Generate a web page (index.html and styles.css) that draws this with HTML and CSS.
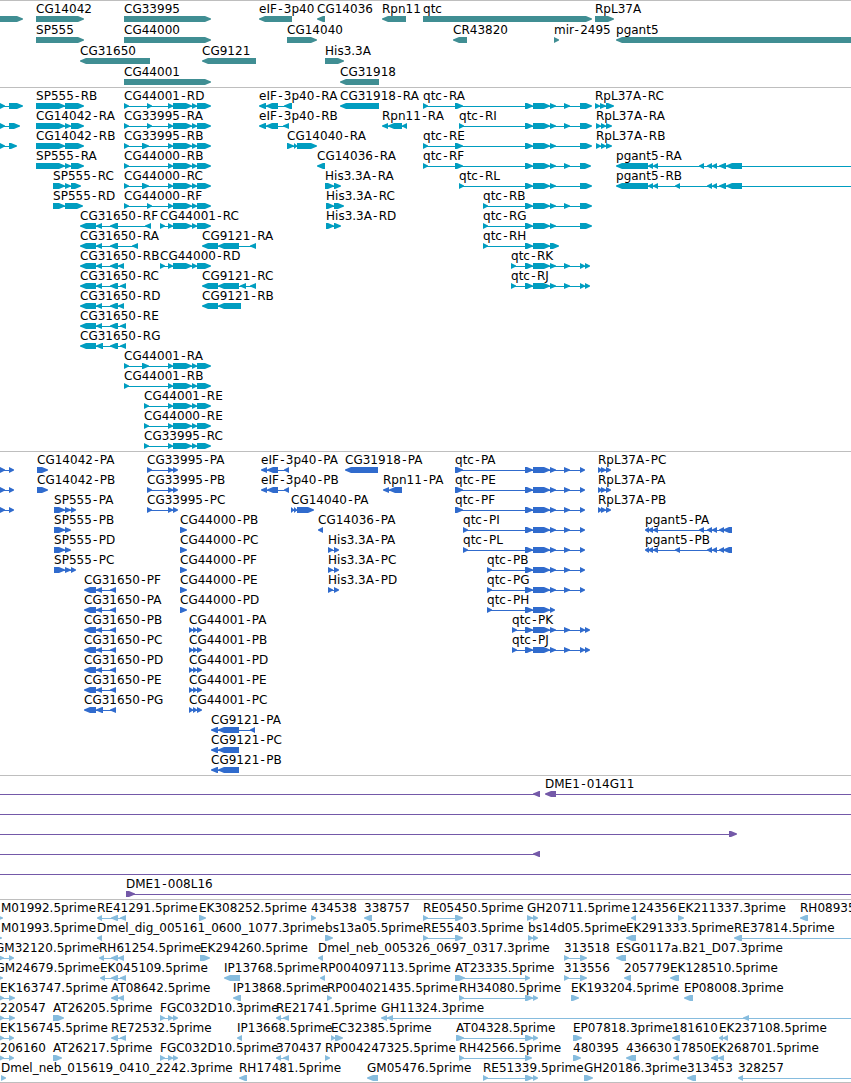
FILE: index.html
```html
<!DOCTYPE html>
<html lang="en">
<head>
  <meta charset="utf-8">
  <title>Genome browser</title>
  <link rel="stylesheet" href="styles.css">
</head>
<body>
  <main class="browser">
    <section class="track genes" id="genes"></section>
    <section class="track transcripts" id="transcripts"></section>
    <section class="track cds" id="cds"></section>
    <section class="track bacs" id="bacs"></section>
    <section class="track ests" id="ests"></section>
  </main>
  <script src="tracks.js"></script>
</body>
</html>
```
FILE: styles.css
```css
body {
  margin: 0;
  background: #fff;
  font-family: "DejaVu Sans", sans-serif;
  font-size: 12px;
}

.browser {
  display: flex;
  flex-direction: column;
  overflow: hidden;
  border-bottom: 1px solid #bebebe;
}

.track {
  box-sizing: border-box;
  border-top: 1px solid #bebebe;
}

.track svg {
  display: block;
  width: 100%;
  height: 100%;
}

.track text {
  fill: #000;
  white-space: pre;
}

.block, .intron {
  fill: currentColor;
}

/* One height and one colour for each track */
.genes {
  height: 87px;
  color: #408e93;
}

.transcripts {
  height: 364px;
  color: #009dc0;
}

.cds {
  height: 324px;
  color: #306bcd;
}

.bacs {
  height: 124px;
  color: #7459a8;
}

.ests {
  height: 183px;
  color: #86bcde;
}
```
FILE: tracks.js
```javascript
const SVG = 'http://www.w3.org/2000/svg';

// exons shared by several transcripts
const CG = '168-173 173-192 192-197 197-211';
const Q = '525-533 533-550 550-556';
const END = 861;

// Each row is a list of features: [label, strand, blocks, line end, label x]
const genes = [
  [['', '+', '-9-23'], ['CG14042', '+', '36-84'], ['CG33995', '+', '124-211'], ['eIF-3p40', '-', '259-292'],
   ['CG14036', '-', '317-325'], ['Rpn11', '-', '382-406'], ['qtc', '+', '423-592'], ['RpL37A', '+', '595-614']],
  [['SP555', '+', '36-84'], ['CG44000', '+', '124-211'], ['CG14040', '+', '287-317'], ['CR43820', '-', '453-467'],
   ['mir-2495', '+', '554-559'], ['pgant5', '-', '616-861']],
  [['CG31650', '-', '80-150'], ['CG9121', '-', '202-256'], ['His3.3A', '+', '325-344']],
  [['CG44001', '+', '124-211'], ['CG31918', '-', '340-379']]
];

const transcripts = [
  [['', '+', '0-5 9-23'], ['SP555-RB', '+', '36-65 65-84'], ['CG44001-RD', '+', '124-129 147-152 ' + CG],
   ['eIF-3p40-RA', '-', '259-266 266-278 284-292'], ['CG31918-RA', '-', '340-379'],
   ['qtc-RA', '+', '423-428 455-463 ' + Q + ' 564-570 580-592'], ['RpL37A-RC', '+', '595-600 600-606 606-614']],
  [['', '+', '0-5 9-20'], ['CG14042-RA', '+', '36-65 65-71 71-84'], ['CG33995-RA', '+', '124-129 147-152 ' + CG],
   ['eIF-3p40-RB', '-', '259-266 266-278 283-289'], ['Rpn11-RA', '-', '382-388 388-402 402-407'],
   ['qtc-RI', '+', '459-464 ' + Q + ' 564-570 580-592'], ['RpL37A-RA', '+', '596-601 601-606 606-612']],
  [['', '+', '0-5 9-17'], ['CG14042-RB', '+', '36-65 65-84'], ['CG33995-RB', '+', '124-129 142-149 ' + CG],
   ['CG14040-RA', '+', '287-294 294-297 297-317'], ['qtc-RE', '+', '423-428 455-463 ' + Q + ' 580-592'],
   ['RpL37A-RB', '+', '596-601 601-606 606-612']],
  [['SP555-RA', '+', '36-65 65-71 71-84'], ['CG44000-RB', '+', '124-129 ' + CG], ['CG14036-RA', '-', '317-325'],
   ['qtc-RF', '+', '423-428 455-463 ' + Q + ' 564-570 580-591'],
   ['pgant5-RA', '-', '616-648 648-653 653-658 699-704 707-712 712-717 719-726 726-742', END]],
  [['SP555-RC', '+', '53-65 65-71 71-81'], ['CG44000-RC', '+', '124-129 142-149 ' + CG],
   ['His3.3A-RA', '+', '325-334 334-341'], ['qtc-RL', '+', '459-464 ' + Q + ' 580-592'],
   ['pgant5-RB', '-', '616-648 648-653 653-658 675-680 707-712 712-717 719-726 726-742', END]],
  [['SP555-RD', '+', '53-65 65-83'], ['CG44000-RF', '+', '124-129 147-152 ' + CG],
   ['His3.3A-RC', '+', '326-334 334-344'], ['qtc-RB', '+', '483-488 ' + Q + ' 564-570 580-592']],
  [['CG31650-RF', '-', '80-96 96-102 110-118 145-151'], ['CG44001-RC', '+', '160-165 ' + CG],
   ['His3.3A-RD', '+', '326-334 334-341'], ['qtc-RG', '+', '483-488 ' + Q + ' 580-592']],
  [['CG31650-RA', '-', '80-96 96-102 110-118 132-138'], ['CG9121-RA', '-', '202-218 218-239 250-256'],
   ['qtc-RH', '+', '483-488 525-533 533-550 550-559']],
  [['CG31650-RB', '-', '80-96 96-102 110-118 118-124'], ['CG44000-RD', '+', '160-165 ' + CG],
   ['qtc-RK', '+', '511-516 ' + Q + ' 564-570 580-585 585-590']],
  [['CG31650-RC', '-', '80-96 96-102 110-118 120-126'], ['CG9121-RC', '-', '202-218 218-239 240-246 250-256'],
   ['qtc-RJ', '+', '511-516 ' + Q + ' 564-570 580-585 585-590']],
  [['CG31650-RD', '-', '80-96 96-102 110-118 118-124'], ['CG9121-RB', '-', '202-218 218-241']],
  [['CG31650-RE', '-', '80-96 96-102 110-118 120-126']],
  [['CG31650-RG', '-', '80-96 96-103 110-118 120-126']],
  [['CG44001-RA', '+', '124-129 142-149 ' + CG]],
  [['CG44001-RB', '+', '124-129 ' + CG]],
  [['CG44001-RE', '+', '144-149 ' + CG]],
  [['CG44000-RE', '+', '144-149 ' + CG]],
  [['CG33995-RC', '+', '144-149 ' + CG]]
];

const cds = [
  [['', '+', '0-5 9-14'], ['CG14042-PA', '+', '37-48'], ['CG33995-PA', '+', '147-152 168-173 173-178'],
   ['eIF-3p40-PA', '-', '261-267 267-278 284-289'], ['CG31918-PA', '-', '345-378'],
   ['qtc-PA', '+', '455-463 ' + Q + ' 564-570 580-585'], ['RpL37A-PC', '+', '598-602 601-606 606-611']],
  [['', '+', '0-5 9-14'], ['CG14042-PB', '+', '37-48'], ['CG33995-PB', '+', '147-152 168-173 173-178'],
   ['eIF-3p40-PB', '-', '261-267 267-278 284-289'], ['Rpn11-PA', '-', '383-389 389-402'],
   ['qtc-PE', '+', '455-463 ' + Q + ' 564-570 580-585'], ['RpL37A-PA', '+', '598-602 601-606 606-611']],
  [['', '+', '0-5 9-14'], ['SP555-PA', '+', '54-65 65-71 71-76'], ['CG33995-PC', '+', '147-152 168-173 173-178'],
   ['CG14040-PA', '+', '291-294 294-297 297-314'], ['qtc-PF', '+', '455-463 ' + Q + ' 564-570 580-585'],
   ['RpL37A-PB', '+', '598-602 601-606 606-611']],
  [['SP555-PB', '+', '54-65 65-71'], ['CG44000-PB', '+', '180-187'], ['CG14036-PA', '-', '318-323'],
   ['qtc-PI', '+', '463-468 ' + Q + ' 564-570 580-585'],
   ['pgant5-PA', '-', '645-649 648-653 653-658 699-704 707-712 712-717 719-724 723-732']],
  [['SP555-PD', '+', '54-65 65-71'], ['CG44000-PC', '+', '180-187'], ['His3.3A-PA', '+', '328-333 334-339'],
   ['qtc-PL', '+', '463-468 ' + Q + ' 564-570 580-585'],
   ['pgant5-PB', '-', '645-649 648-653 653-658 675-680 707-712 712-717 719-724 723-732']],
  [['SP555-PC', '+', '54-65 65-71 71-76'], ['CG44000-PF', '+', '180-187'], ['His3.3A-PC', '+', '328-333 334-339'],
   ['qtc-PB', '+', '487-492 ' + Q + ' 564-570 580-585']],
  [['CG31650-PF', '-', '84-96 96-102 110-116'], ['CG44000-PE', '+', '180-187'], ['His3.3A-PD', '+', '328-333 334-339'],
   ['qtc-PG', '+', '487-492 ' + Q + ' 564-570 580-585']],
  [['CG31650-PA', '-', '84-96 96-102 110-116'], ['CG44000-PD', '+', '180-187'],
   ['qtc-PH', '+', '487-492 525-533 533-550 550-555']],
  [['CG31650-PB', '-', '84-96 96-102 110-116'], ['CG44001-PA', '+', '189-193 193-197 197-202'],
   ['qtc-PK', '+', '512-517 ' + Q + ' 564-570 580-585 585-590']],
  [['CG31650-PC', '-', '84-96 96-102 110-116'], ['CG44001-PB', '+', '189-193 193-197 197-202'],
   ['qtc-PJ', '+', '512-517 ' + Q + ' 564-570 580-585 585-590']],
  [['CG31650-PD', '-', '84-96 96-102 110-116'], ['CG44001-PD', '+', '189-193 193-197 197-202']],
  [['CG31650-PE', '-', '84-96 96-102 110-116'], ['CG44001-PE', '+', '189-193 193-197 197-202']],
  [['CG31650-PG', '-', '84-96 96-103 110-116'], ['CG44001-PC', '+', '189-193 193-197 197-202']],
  [['CG9121-PA', '-', '211-218 218-239 250-255']],
  [['CG9121-PC', '-', '211-218 218-239']],
  [['CG9121-PB', '-', '211-218 218-239']]
];

const bacs = [
  [['', '-', '-20--10 533-540'], ['DME1-014G11', '-', '545-556', END]],
  [['', '+', '-20--10', END]],
  [['', '+', '-20--10 729-737']],
  [['', '-', '-20--10 533-540']],
  [['', '+', '-20--10', END]],
  [['DME1-008L16', '+', '126-135', END]]
];

const ests = [
  [['M01992.5prime', '+', '-3-3', 0, 1], ['RE41291.5prime', '-', '97-102 111-118 120-126'],
   ['EK308252.5prime', '+', '199-206'], ['434538', '+', '311-316'], ['338757', '-', '364-372'],
   ['RE05450.5prime', '+', '423-428 455-463'], ['GH20711.5prime', '+', '527-533 533-538'],
   ['124356', '-', '631-636'], ['EK211337.3prime', '+', '678-684'], ['RH08935.5prime', '-', '800-808']],
  [['M01993.5prime', '+', '-4-2', 0, 1], ['Dmel_dig_005161_0600_1077.3prime', '-', '97-102'],
   ['bs13a05.5prime', '+', '325-333'], ['RE55403.5prime', '+', '423-428 455-463'],
   ['bs14d05.5prime', '+', '528-533 533-538'], ['EK291333.5prime', '-', '626-636'],
   ['RE37814.5prime', '-', '734-742', END]],
  [['GM32120.5prime', '+', '-2-4 9-14', 0, -5], ['RH61254.5prime', '-', '99-104 111-118 118-124'],
   ['EK294260.5prime', '+', '200-210'], ['Dmel_neb_005326_0697_0317.3prime', '-', '318-323'],
   ['313518', '+', '564-569 580-587'], ['ESG0117a.B21_D07.3prime', '-', '616-626']],
  [['GM24679.5prime', '+', '-3-3', 0, -4.5], ['EK045109.5prime', '-', '100-105 111-118 120-126'],
   ['IP13768.5prime', '-', '224-240'], ['RP004097113.5prime', '-', '320-325'],
   ['AT23335.5prime', '+', '455-465 525-530'], ['313556', '+', '564-569 580-587'],
   ['205779', '-', '624-631'], ['EK128510.5prime', '-', '670-679']],
  [['EK163747.5prime', '+', '-1-4 9-15', 0, 0], ['AT08642.5prime', '-', '111-118 118-124'],
   ['IP13868.5prime', '-', '233-241'], ['RP004021435.5prime', '+', '327-332'],
   ['RH34080.5prime', '+', '459-464 525-533 533-538'], ['EK193204.5prime', '+', '571-579'],
   ['EP08008.3prime', '-', '684-693']],
  [['220547', '+', '-1-4 9-15', 0, 0], ['AT26205.5prime', '+', '53-64'],
   ['FGC032D10.3prime', '+', '160-165 168-173 173-178'], ['RE21741.5prime', '-', '276-281 283-289'],
   ['GH11324.3prime', '-', '381-387 387-393 743-749', END]],
  [['EK156745.5prime', '+', '-1-4 9-14', 0, 0], ['RE72532.5prime', '-', '111-118 120-126'],
   ['IP13668.5prime', '-', '237-242'], ['EC32385.5prime', '+', '331-335 335-343'],
   ['AT04328.5prime', '+', '456-464 525-533 533-538'], ['EP07818.3prime', '+', '573-582'],
   ['181610', '-', '672-680'], ['EK237108.5prime', '-', '719-723 723-728']],
  [['206160', '+', '-1-4 9-14', 0, 0], ['AT26217.5prime', '+', '53-62'],
   ['FGC032D10.5prime', '+', '160-165 168-173 173-178'], ['370437', '-', '276-281 283-289'],
   ['RP004247325.5prime', '+', '325-330'], ['RH42566.5prime', '+', '459-464 525-532'],
   ['480395', '+', '573-581'], ['436630', '-', '626-636'], ['17850', '-', '673-679'],
   ['EK268701.5prime', '-', '711-718 718-724']],
  [['Dmel_neb_015619_0410_2242.3prime', '+', '1-6'], ['RH17481.5prime', '-', '239-247'],
   ['GM05476.5prime', '-', '367-378'], ['RE51339.5prime', '+', '483-488 525-533 533-538'],
   ['GH20186.3prime', '+', '584-593'], ['313453', '-', '687-696'], ['328257', '-', '738-743', END]]
];

function add(parent, name, attrs) {
  const el = document.createElementNS(SVG, name);
  for (const key in attrs) el.setAttribute(key, attrs[key]);
  parent.appendChild(el);
  return el;
}

// 6px high box that ends in a point on the strand's side
function blockPath(x1, x2, y, strand) {
  const tip = Math.min(6, x2 - x1);
  if (strand === '+') {
    const s = x2 - tip;
    return `M${x1} ${y}H${s}L${x2} ${y + 2.5}V${y + 3.5}L${s} ${y + 6}H${x1}Z`;
  }
  const s = x1 + tip;
  return `M${x2} ${y}H${s}L${x1} ${y + 2.5}V${y + 3.5}L${s} ${y + 6}H${x2}Z`;
}

function drawFeature(svg, feature, y) {
  const [label, strand, list, lineEnd, labelX] = feature;
  const blocks = list.split(' ').map(b => b.match(/^(-?\d+)-(-?\d+)$/).slice(1).map(Number));
  const start = blocks[0][0];
  const end = lineEnd || blocks[blocks.length - 1][1];

  if (blocks.length > 1 || lineEnd) {
    add(svg, 'rect', { class: 'intron', x: start + 1, y: y + 18, width: end - start - 2, height: 1 });
  }
  blocks.forEach(([x1, x2]) => {
    add(svg, 'path', { class: 'block', d: blockPath(x1, x2, y + 15, strand) });
  });

  if (label) {
    // a little air on both sides of a hyphen
    const dx = [...label].map((c, i) => (c === '-' || label[i - 1] === '-') ? 1.3 : 0).join(' ');
    const text = add(svg, 'text', { x: labelX === undefined ? start : labelX, y: y + 12, dx: dx });
    text.textContent = label;
  }
}

function drawTrack(id, rows, pitch) {
  const svg = add(document.getElementById(id), 'svg', {});
  rows.forEach((row, i) => row.forEach(feature => drawFeature(svg, feature, i * pitch)));
}

drawTrack('genes', genes, 21);
drawTrack('transcripts', transcripts, 20);
drawTrack('cds', cds, 20);
drawTrack('bacs', bacs, 20);
drawTrack('ests', ests, 20);
```
